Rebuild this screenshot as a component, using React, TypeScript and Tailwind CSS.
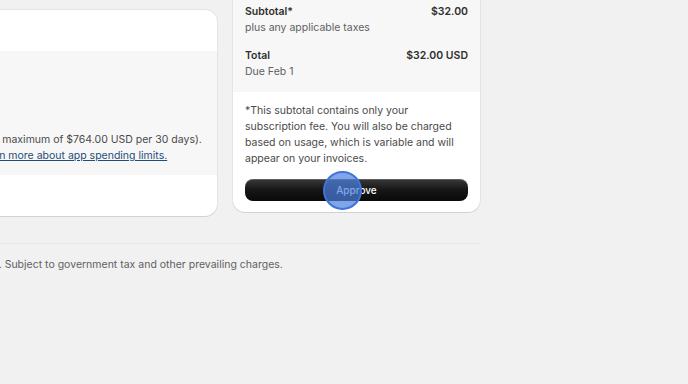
import React from 'react';

export default function App() {
  return (
    <div className="min-h-screen overflow-hidden bg-[#f1f1f1] text-[10.5px] leading-4 text-[#303030]" style={{ fontFamily: 'Inter, "Noto Sans", sans-serif' }}>
      <div className="-ml-[360px] -mt-[52px] w-[841px]">
        <div className="flex items-start gap-4">
          {/* Left card */}
          <div className="mt-[62px] w-[577px] overflow-hidden rounded-xl bg-white shadow-[0_1px_0_rgba(0,0,0,0.08),0_0_0_1px_rgba(0,0,0,0.05)]">
            <div className="h-[41px] px-4 pt-3 font-semibold">Usage</div>
            <div className="grid h-[124px] grid-cols-[305px_1fr] gap-4 bg-[#f7f7f7] px-4 pb-[11px]">
              <div className="pt-3 text-[#616161]">Charges</div>
              <div className="flex flex-col justify-end whitespace-nowrap text-[#4a4a4a]">
                <span>(to a maximum of $764.00 USD per 30 days).</span>
                <a href="#" className="text-[#1f4e79] underline">Learn more about app spending limits.</a>
              </div>
            </div>
            <div className="h-[41px]" />
          </div>

          {/* Right card */}
          <div className="w-[247px] overflow-hidden rounded-xl bg-white shadow-[0_1px_0_rgba(0,0,0,0.08),0_0_0_1px_rgba(0,0,0,0.05)]">
            <div className="flex flex-col gap-3 bg-[#f7f7f7] px-3 pb-3 pt-3">
              <div>
                <div className="flex justify-between font-semibold"><span>Plan</span><span>$32.00</span></div>
                <div className="text-[#616161]">Every 30 days</div>
              </div>
              <div>
                <div className="flex justify-between font-semibold"><span>Subtotal*</span><span>$32.00</span></div>
                <div className="text-[#616161]">plus any applicable taxes</div>
              </div>
              <div>
                <div className="flex justify-between font-semibold"><span>Total</span><span>$32.00 USD</span></div>
                <div className="text-[#616161]">Due Feb 1</div>
              </div>
            </div>
            <div className="px-3 pb-[11px] pt-[11px]">
              <p className="text-[#4a4a4a]">
                *This subtotal contains only your subscription fee. You will also be charged based on usage, which is variable and will appear on your invoices.
              </p>
              <div className="relative mt-3">
                <button className="h-[22px] w-full rounded-lg bg-gradient-to-b from-[#3a3a3a] via-[#161616] to-[#0a0a0a] text-[10px] font-medium text-white shadow-[inset_0_1px_0_rgba(255,255,255,0.2)]">
                  Approve
                </button>
                <div className="pointer-events-none absolute left-[78px] top-[-8px] h-[39px] w-[39px] rounded-full border-2 border-[#3f74d8] bg-[#4a7fe0]/70" />
              </div>
            </div>
          </div>
        </div>

        <div className="mt-[27px] border-t border-[#e6e6e6] pt-[13px]">
          <p className="ml-[337px] text-[#616161]">USD. Subject to government tax and other prevailing charges.</p>
        </div>
      </div>
    </div>
  );
}
